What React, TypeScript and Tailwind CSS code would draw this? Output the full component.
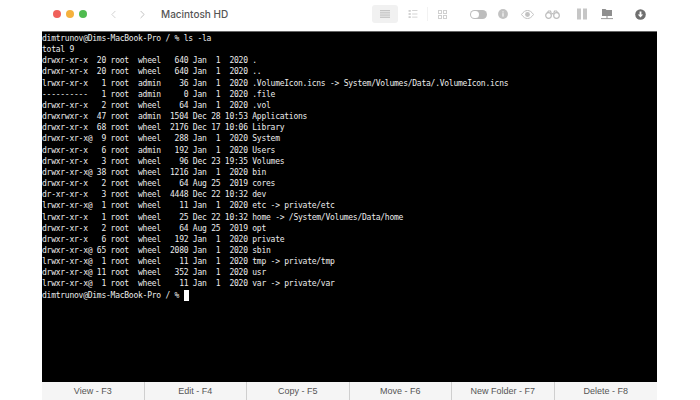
import { ChevronLeft, ChevronRight } from 'lucide-react';

const lines = [
  'dimtrunov@Dims-MacBook-Pro / % ls -la',
  'total 9',
  'drwxr-xr-x  20 root  wheel   640 Jan  1  2020 .',
  'drwxr-xr-x  20 root  wheel   640 Jan  1  2020 ..',
  'lrwxr-xr-x   1 root  admin    36 Jan  1  2020 .VolumeIcon.icns -> System/Volumes/Data/.VolumeIcon.icns',
  '----------   1 root  admin     0 Jan  1  2020 .file',
  'drwxr-xr-x   2 root  wheel    64 Jan  1  2020 .vol',
  'drwxrwxr-x  47 root  admin  1504 Dec 28 10:53 Applications',
  'drwxr-xr-x  68 root  wheel  2176 Dec 17 10:06 Library',
  'drwxr-xr-x@  9 root  wheel   288 Jan  1  2020 System',
  'drwxr-xr-x   6 root  admin   192 Jan  1  2020 Users',
  'drwxr-xr-x   3 root  wheel    96 Dec 23 19:35 Volumes',
  'drwxr-xr-x@ 38 root  wheel  1216 Jan  1  2020 bin',
  'drwxr-xr-x   2 root  wheel    64 Aug 25  2019 cores',
  'dr-xr-xr-x   3 root  wheel  4448 Dec 22 10:32 dev',
  'lrwxr-xr-x@  1 root  wheel    11 Jan  1  2020 etc -> private/etc',
  'lrwxr-xr-x   1 root  wheel    25 Dec 22 10:32 home -> /System/Volumes/Data/home',
  'drwxr-xr-x   2 root  wheel    64 Aug 25  2019 opt',
  'drwxr-xr-x   6 root  wheel   192 Jan  1  2020 private',
  'drwxr-xr-x@ 65 root  wheel  2080 Jan  1  2020 sbin',
  'lrwxr-xr-x@  1 root  wheel    11 Jan  1  2020 tmp -> private/tmp',
  'drwxr-xr-x@ 11 root  wheel   352 Jan  1  2020 usr',
  'lrwxr-xr-x@  1 root  wheel    11 Jan  1  2020 var -> private/var',
];

const buttons = ['View - F3', 'Edit - F4', 'Copy - F5', 'Move - F6', 'New Folder - F7', 'Delete - F8'];

function Toolbar() {
  return (
    <div className="h-[31px] flex items-center pl-[53px] pb-[3px] bg-white font-['Inter',sans-serif]">
      <span className="w-2 h-2 rounded-full bg-[#f0605a]" />
      <span className="w-2 h-2 rounded-full bg-[#f5b13d] ml-[5px]" />
      <span className="w-2 h-2 rounded-full bg-[#4fbb4f] ml-[5px]" />
      <ChevronLeft className="w-[13px] h-[13px] text-[#c8c8c8] ml-[20px]" strokeWidth={1.5} />
      <ChevronRight className="w-[13px] h-[13px] text-[#b4b4b4] ml-[16px]" strokeWidth={1.5} />
      <span className="ml-[12px] w-[211px] text-[10px] font-medium text-[#555]">Macintosh HD</span>

      <div className="w-[26px] h-[18px] rounded-[3px] bg-[#f1f1f1] flex items-center justify-center">
        <svg width="10" height="8" viewBox="0 0 10 8" fill="#c4c4c4">
          <rect y="0" width="10" height="1.3" />
          <rect y="2.2" width="10" height="1.3" />
          <rect y="4.4" width="10" height="1.3" />
          <rect y="6.6" width="10" height="1.3" />
        </svg>
      </div>
      <svg className="ml-[10px]" width="10" height="8" viewBox="0 0 10 9" fill="#cfcfcf">
        <rect width="2.5" height="2" />
        <rect x="4" width="6" height="1" />
        <rect y="3.5" width="2.5" height="2" />
        <rect x="4" y="4" width="6" height="1" />
        <rect y="7" width="2.5" height="2" />
        <rect x="4" y="7.5" width="6" height="1" />
      </svg>
      <span className="ml-[9px] w-px h-[14px] bg-[#f2f2f2]" />
      <svg className="ml-[10px]" width="9" height="9" viewBox="0 0 9 9" fill="none" stroke="#d0d0d0">
        <rect x="0.5" y="0.5" width="3" height="3" />
        <rect x="5.5" y="0.5" width="3" height="3" />
        <rect x="0.5" y="5.5" width="3" height="3" />
        <rect x="5.5" y="5.5" width="3" height="3" />
      </svg>

      <div className="ml-[23px] w-[17px] h-[9px] rounded-full bg-[#bdbdbd] p-px">
        <div className="w-[8px] h-[7px] rounded-full bg-white" />
      </div>
      <svg className="ml-[11px]" width="10" height="10" viewBox="0 0 11 11">
        <circle cx="5.5" cy="5.5" r="5.4" fill="#c2c2c2" />
        <rect x="4.9" y="4.6" width="1.2" height="3.8" fill="#fff" />
        <rect x="4.9" y="2.6" width="1.2" height="1.2" fill="#fff" />
      </svg>
      <svg className="ml-[13px]" width="13" height="9" viewBox="0 0 13 9">
        <path d="M0.5 4.5C2.5 1.5 4.5 0.5 6.5 0.5s4 1 6 4c-2 3-4 4-6 4s-4-1-6-4z" fill="none" stroke="#c2c2c2" />
        <circle cx="6.5" cy="4.5" r="2.4" fill="#c2c2c2" />
      </svg>
      <svg className="ml-[11px]" width="15" height="9" viewBox="0 0 15 9" fill="none" stroke="#bdbdbd" strokeWidth="1.2">
        <circle cx="3.5" cy="5.5" r="2.8" />
        <circle cx="11.5" cy="5.5" r="2.8" />
        <path d="M6 4c.8-.5 2.2-.5 3 0M2 3l1.5-2h2l.7 2M13 3l-1.5-2h-2l-.7 2" />
      </svg>
      <svg className="ml-[17px]" width="10" height="12" viewBox="0 0 10 11" fill="#c6c6c6">
        <rect width="4" height="11" />
        <rect x="6" width="4" height="11" />
      </svg>
      <svg className="ml-[14px]" width="12" height="12" viewBox="0 0 12 12" fill="#8f8f8f">
        <path d="M1 1h3.5l1 1H11v6H1z" />
        <rect x="5.5" y="8" width="1" height="2.5" />
        <rect x="0" y="10.2" width="12" height="0.9" />
      </svg>
      <svg className="ml-[22px]" width="11" height="11" viewBox="0 0 11 11">
        <circle cx="5.5" cy="5.5" r="5.3" fill="#6f6f6f" />
        <path d="M4.6 2.4h1.8v3h1.8L5.5 8.4 2.8 5.4h1.8z" fill="#fff" />
      </svg>
    </div>
  );
}

export default function App() {
  return (
    <div className="w-[700px] h-[400px] bg-white overflow-hidden flex flex-col">
      <Toolbar />
      <div className="ml-[42px] mr-[43px] flex-1 flex flex-col min-h-0">
        <div className="flex-1 bg-black border-t border-[#666] pt-px text-[#ececec] font-['DejaVu_Sans_Mono',monospace] text-[8px] leading-[11.17px] tracking-[-0.245px] whitespace-pre overflow-hidden">
          {lines.map((line) => (
            <div key={line} className="h-[11.17px]">{line}</div>
          ))}
          <div className="h-[11.17px] flex items-center">
            <span>dimtrunov@Dims-MacBook-Pro / % </span>
            <span className="w-[5px] h-[11px] bg-white" />
          </div>
        </div>
        <div className="h-[18px] grid grid-cols-6 bg-[#f5f5f5] font-['Liberation_Sans',sans-serif] text-[9px] text-[#555]">
          {buttons.map((label, i) => (
            <div
              key={label}
              className={`flex items-center justify-center pt-[2px] ${i < 5 ? 'border-r border-[#cfcfcf]' : ''}`}
            >
              {label}
            </div>
          ))}
        </div>
      </div>
    </div>
  );
}
